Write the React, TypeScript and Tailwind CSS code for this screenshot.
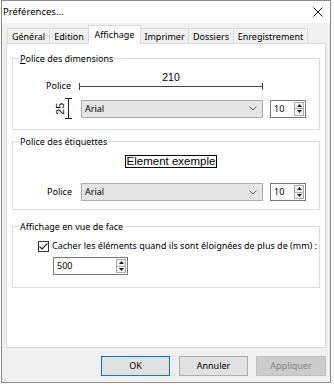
import React from 'react';

const tabs = [
  { label: 'Général', w: 'w-[42px]' },
  { label: 'Edition', w: 'w-[39px]' },
  { label: 'Affichage', w: 'w-[53px]', active: true },
  { label: 'Imprimer', w: 'w-[47px]' },
  { label: 'Dossiers', w: 'w-[45px]' },
  { label: 'Enregistrement', w: 'w-[75px]' },
];

function Select({ value }: { value: string }) {
  return (
    <div className="flex h-[18px] w-[182px] items-center justify-between border border-[#adadad] bg-[#e5e5e5] pl-[3px] pr-[5px]">
      <span className="leading-[16px]">{value}</span>
      <svg width="8" height="5" viewBox="0 0 8 5">
        <path d="M0.5 0.5 L4 4 L7.5 0.5" fill="none" stroke="#606060" />
      </svg>
    </div>
  );
}

function Spin({ value, className }: { value: string; className: string }) {
  return (
    <div className={`flex h-[18px] border border-[#7a7a7a] bg-white ${className}`}>
      <span className="flex-1 pl-[3px] leading-[16px]">{value}</span>
      <div className="my-[1px] mr-[1px] flex w-[10px] flex-col border border-[#adadad] bg-[#f0f0f0]">
        <div className="flex flex-1 items-center justify-center border-b border-[#adadad]">
          <svg width="5" height="3" viewBox="0 0 5 3">
            <path d="M0 3 L2.5 0 L5 3 Z" fill="#202020" />
          </svg>
        </div>
        <div className="flex flex-1 items-center justify-center">
          <svg width="5" height="3" viewBox="0 0 5 3">
            <path d="M0 0 L2.5 3 L5 0 Z" fill="#202020" />
          </svg>
        </div>
      </div>
    </div>
  );
}

function Group({ title, className, children }: { title: React.ReactNode; className: string; children: React.ReactNode }) {
  return (
    <fieldset className={`border border-[#dcdcdc] ${className}`}>
      <legend className="ml-[6px] px-[1px] leading-[13px]">{title}</legend>
      {children}
    </fieldset>
  );
}

export default function App() {
  return (
    <div className="h-[387px] w-[334px] bg-white font-['Noto_Sans',sans-serif] text-[9px] text-black">
      <div className="ml-[1px] flex h-[383px] w-[330px] flex-col border border-[#8a8a8a] bg-[#f0f0f0]">
        {/* title bar */}
        <div className="flex h-[22px] items-center justify-between bg-white pl-[1px] pr-[7px]">
          <span className="text-[9.5px] leading-[14px]">Préférences...</span>
          <svg width="10" height="10" viewBox="0 0 10 10">
            <path d="M0.5 0.5 L9.5 9.5 M9.5 0.5 L0.5 9.5" stroke="#111" strokeWidth="1" />
          </svg>
        </div>

        {/* tabs */}
        <div className="ml-[5px] mt-[2px] flex h-[18px] items-end">
          {tabs.map((t, i) =>
            t.active ? (
              <div
                key={t.label}
                className={`relative z-10 -mb-px flex h-[19px] ${t.w} items-start justify-center border-x border-t border-[#d9d9d9] bg-white pt-[2px] leading-[13px]`}
              >
                {t.label}
              </div>
            ) : (
              <div
                key={t.label}
                className={`flex h-[15px] ${t.w} items-center justify-center border-t border-[#d9d9d9] bg-[#f0f0f0] pt-[1px] leading-[13px] ${
                  i === 3 ? '' : 'border-l'
                } ${i === tabs.length - 1 ? 'border-r' : ''}`}
              >
                {t.label}
              </div>
            )
          )}
        </div>

        {/* panel */}
        <div className="relative mx-[4px] h-[305px] border border-[#d9d9d9] bg-white px-[5px]">
          <Group
            title={
              <>
                <span className="underline underline-offset-[1px]">P</span>olice des dimensions
              </>
            }
            className="mt-[8px] pb-[10px]"
          >
            <div className="mt-[6px] flex h-[19px]">
              <span className="mt-[9px] w-[58px] text-right leading-[12px]">Police</span>
              <div className="ml-[8px] flex w-[184px] flex-col">
                <span className="text-center font-['Liberation_Sans',sans-serif] text-[10.5px] leading-[12px]">210</span>
                <svg width="184" height="7" viewBox="0 0 184 7">
                  <path d="M0.5 0 V7 M0 3.5 H184 M183.5 0 V7" stroke="#444" strokeWidth="1" fill="none" />
                </svg>
              </div>
            </div>
            <div className="mt-[8px] flex h-[21px] items-center">
              <span className="ml-[44px] flex w-[6px] justify-center">
                <span className="rotate-180 font-['Liberation_Sans',sans-serif] text-[10.5px] leading-[8px] [writing-mode:vertical-rl]">
                  25
                </span>
              </span>
              <svg className="ml-[2px]" width="7" height="21" viewBox="0 0 7 21">
                <path d="M3.5 0 V21 M0 0.5 H7 M0 20.5 H7" stroke="#222" strokeWidth="1" fill="none" />
              </svg>
              <div className="ml-[9px]">
                <Select value="Arial" />
              </div>
              <Spin value="10" className="ml-[7px] w-[36px]" />
            </div>
          </Group>

          <Group title="Police des étiquettes" className="mt-[5px] pb-[8px]">
            <div className="ml-[66px] mt-[7px] flex w-[184px] justify-center">
              <span className="h-[13px] border border-black px-[1px] font-['Liberation_Sans',sans-serif] text-[11.5px] leading-[11px]">
                Element exemple
              </span>
            </div>
            <div className="mt-[15px] flex h-[18px] items-center">
              <span className="w-[59px] text-right leading-[12px]">Police</span>
              <div className="ml-[9px]">
                <Select value="Arial" />
              </div>
              <Spin value="10" className="ml-[7px] w-[36px]" />
            </div>
          </Group>

          <Group title="Affichage en vue de face" className="mt-[10px] pb-[12px]">
            <div className="mt-[7px] flex h-[12px] items-center">
              <div className="ml-[25px] flex h-[11px] w-[11px] items-center justify-center border border-[#333] bg-white">
                <svg width="9" height="7" viewBox="0 0 9 7">
                  <path d="M0.5 3.5 L3 6 L8.5 0.5" fill="none" stroke="#222" strokeWidth="1.1" />
                </svg>
              </div>
              <span className="ml-[3px] leading-[12px]">Cacher les éléments quand ils sont éloignées de plus de (mm) :</span>
            </div>
            <div className="mt-[5px] flex">
              <Spin value="500" className="ml-[40px] w-[75px]" />
            </div>
          </Group>
        </div>

        {/* buttons */}
        <div className="mt-[8px] flex justify-end pr-[4px]">
          <button className="mr-[9px] h-[20px] w-[69px] border border-[#0078d7] bg-[#e1e1e1] leading-[18px]">OK</button>
          <button className="mr-[8px] h-[20px] w-[69px] border border-[#adadad] bg-[#e1e1e1] leading-[18px]">Annuler</button>
          <button className="h-[20px] w-[70px] border border-[#bfbfbf] bg-[#cccccc] leading-[18px] text-[#838383]">
            Appliquer
          </button>
        </div>
      </div>
    </div>
  );
}
